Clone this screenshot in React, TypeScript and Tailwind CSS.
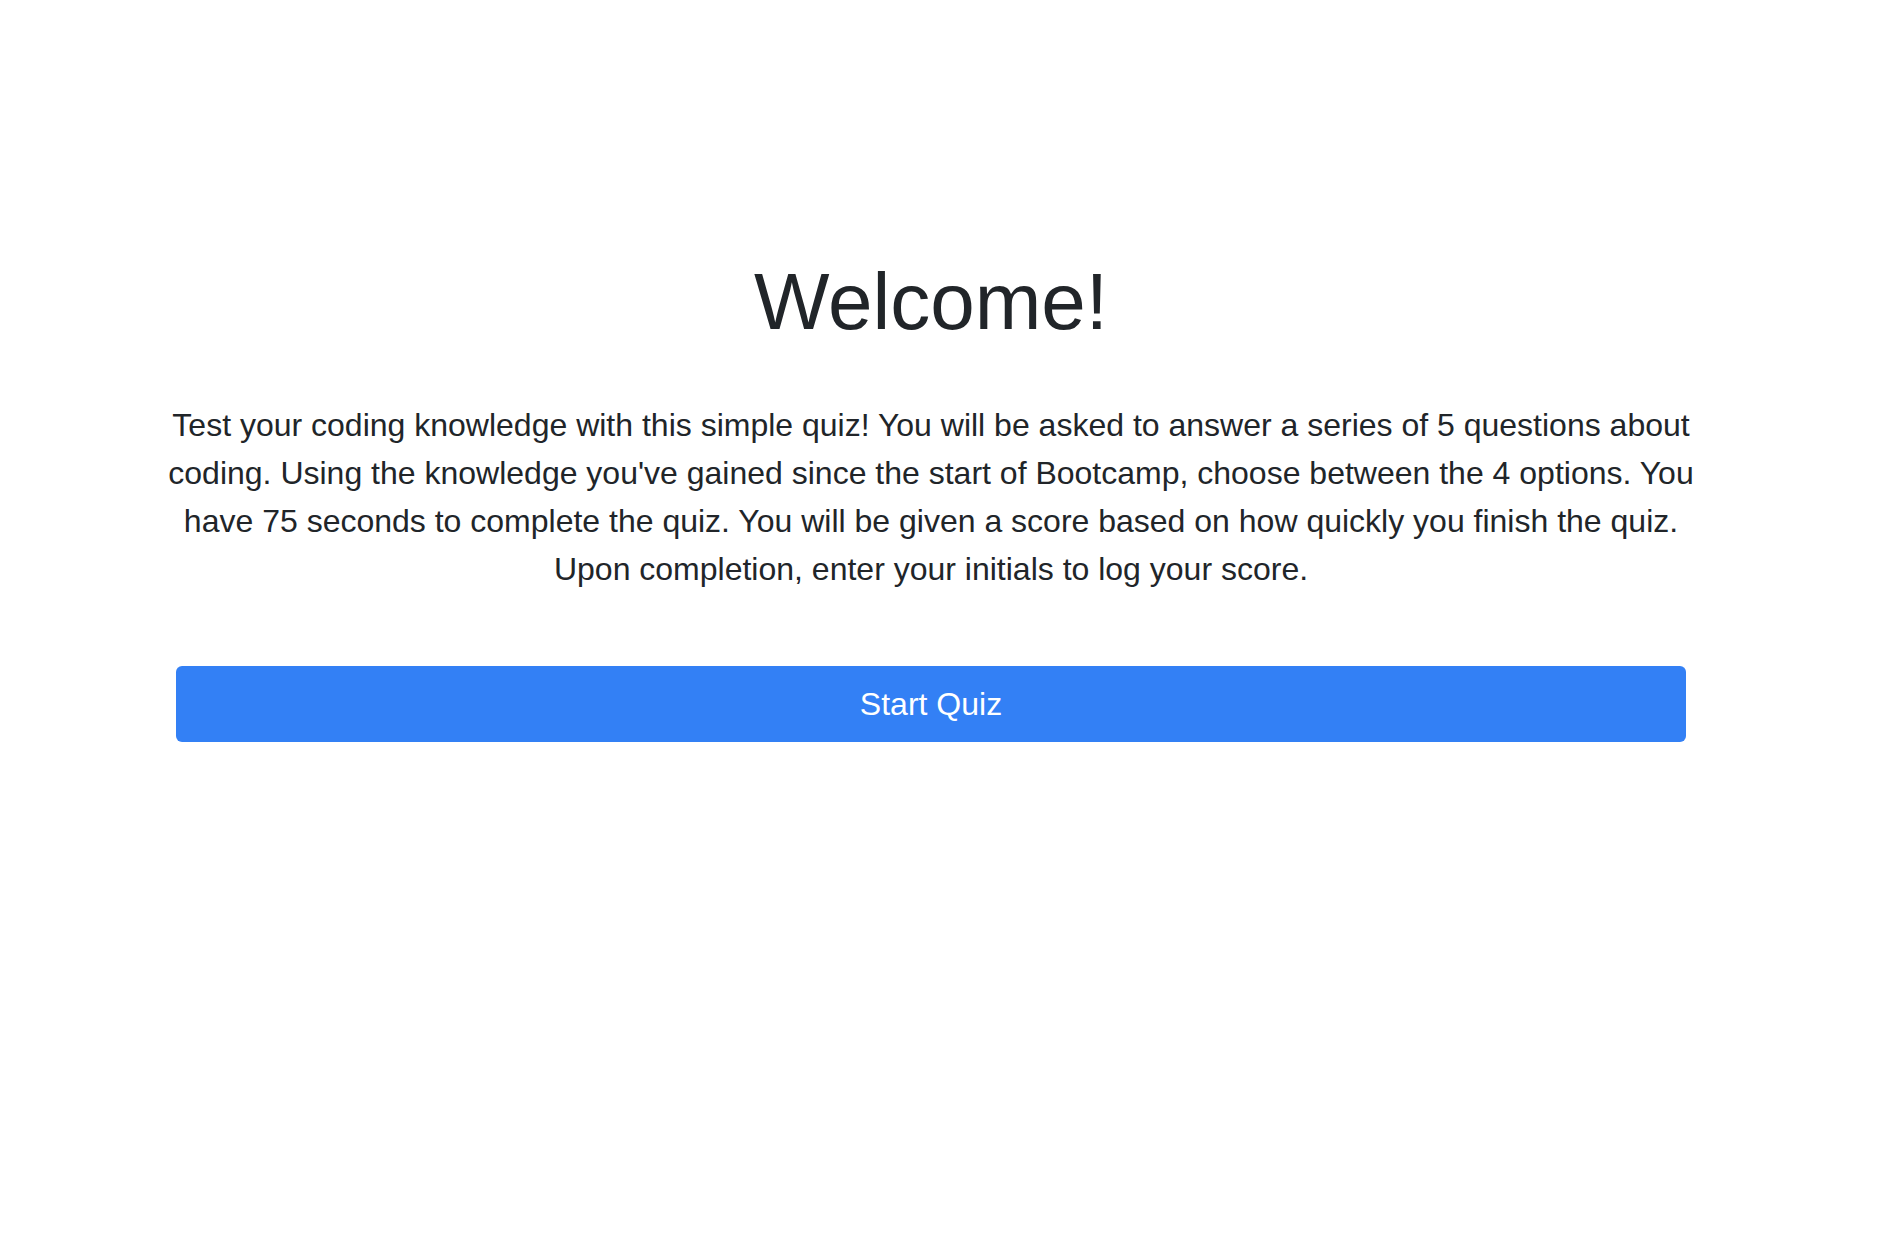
export default function App() {
  return (
    <div className="min-h-screen bg-white font-['Liberation_Sans',Arial,sans-serif] text-[#212529]">
      <div className="w-[1862px] px-[176px] pt-[254px]">
        <h1 className="text-center text-[80px] leading-[96px] font-normal">Welcome!</h1>
        <p className="mx-[-12px] mt-[51px] text-center text-[32px] leading-[48px]">
          Test your coding knowledge with this simple quiz! You will be asked to answer a series of 5 questions about
          coding. Using the knowledge you've gained since the start of Bootcamp, choose between the 4 options. You
          have 75 seconds to complete the quiz. You will be given a score based on how quickly you finish the quiz.
          Upon completion, enter your initials to log your score.
        </p>
        <button className="mt-[73px] flex h-[76px] w-full items-center justify-center rounded-[6px] bg-[#3380f5] text-[32px] text-white">
          Start Quiz
        </button>
      </div>
    </div>
  )
}
